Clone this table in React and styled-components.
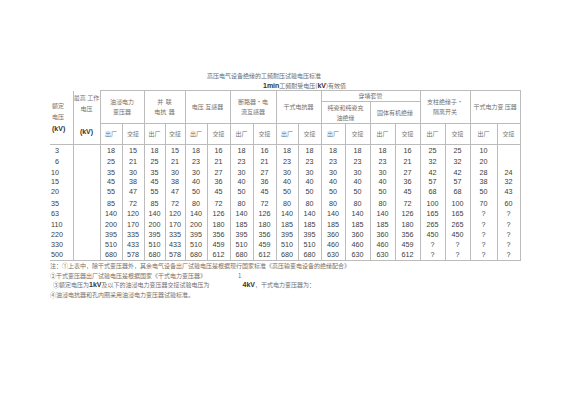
import React from 'react'
import styled, { createGlobalStyle } from 'styled-components'

const GlobalStyle = createGlobalStyle`
  html, body { margin: 0; padding: 0; background: #ffffff; }
  body { font-family: "Liberation Sans", "Noto Sans CJK SC", sans-serif; }
`

const Page = styled.div`
  width: 566px;
  height: 400px;
  background: #ffffff;
  box-sizing: border-box;
  padding-top: 70px;
  overflow: hidden;
`
const Title = styled.div`
  padding-left: 207px;
  font-size: 6px;
  line-height: 11px;
  color: #6a6a6a;
  font-family: "Noto Sans CJK SC", sans-serif;
`
const SubTitle = styled.div`
  padding-left: 263px;
  font-size: 6px;
  line-height: 9px;
  color: #6a6a6a;
  font-family: "Noto Sans CJK SC", sans-serif;
  b {
    font-family: "Liberation Sans", sans-serif;
    font-size: 7px;
    color: #333;
  }
`
const Table = styled.table`
  margin-left: 50px;
  width: 470px;
  table-layout: fixed;
  border-collapse: collapse;
  border-spacing: 0;
`
const Th = styled.th`
  padding: 0;
  font-weight: normal;
  font-size: 6px;
  line-height: 10px;
  color: #707070;
  font-family: "Noto Sans CJK SC", sans-serif;
  text-align: ${p => (p.$left ? 'left' : 'center')};
  vertical-align: ${p => (p.$top ? 'top' : 'middle')};
  border: 1px solid #bcbcbc;
  ${p => p.$noTop && 'border-top: none;'}
  ${p => p.$noLeft && 'border-left: none;'}
  height: ${p => p.$h || 'auto'};
`
const Td = styled.td`
  padding: 0;
  font-size: 7.2px;
  line-height: 8px;
  color: #3c3c3c;
  text-align: ${p => (p.$left ? 'left' : 'center')};
  border-left: ${p => (p.$noLeft ? 'none' : '1px solid #bcbcbc')};
  border-right: 1px solid #bcbcbc;
  ${p => p.$last && 'border-bottom: 1px solid #bcbcbc;'}
  height: ${p => p.$h}px;
  padding-left: ${p => p.$pl || 0}px;
`
const Stack = styled.div`
  display: flex;
  flex-direction: column;
  gap: ${p => p.$gap || 0}px;
  padding: ${p => p.$pad || '0'};
  b {
    font-family: "Liberation Sans", sans-serif;
    font-size: 7px;
    color: #333;
  }
`
const Notes = styled.div`
  margin-left: 50px;
  font-size: 6px;
  line-height: 9.7px;
  color: #707070;
  font-family: "Noto Sans CJK SC", sans-serif;
`
const NoteLine = styled.div`
  display: flex;
  padding-left: ${p => p.$indent || 0}px;
  white-space: nowrap;
  b {
    font-family: "Liberation Sans", sans-serif;
    font-size: 7px;
    color: #333;
  }
`
const Gap = styled.span`
  display: inline-block;
  width: ${p => p.$w}px;
`

const widths = [23, 27, 22, 22, 21, 20, 22, 23, 23, 23, 22, 23, 24, 25, 25, 25, 25, 25, 27, 23]
const heights = [11, 12, 10, 8, 12, 11, 10, 11, 10, 10, 10]
const rated = ['3', '6', '10', '15', '20', '35', '63', '110', '220', '330', '500']

const A = ['18', '25', '35', '45', '55', '85', '140', '200', '395', '510', '680']
const B = ['15', '21', '30', '38', '47', '72', '120', '170', '335', '433', '578']
const C = ['18', '23', '30', '40', '50', '80', '140', '200', '395', '510', '680']
const D = ['16', '21', '27', '36', '45', '72', '126', '180', '356', '459', '612']
const E = ['18', '23', '30', '40', '50', '80', '140', '185', '395', '510', '680']
const F = ['18', '23', '30', '40', '50', '80', '140', '185', '360', '460', '630']
const G = ['25', '32', '42', '57', '68', '100', '165', '265', '450', '?', '?']
const H = ['10', '20', '28', '38', '50', '70', '?', '?', '?', '?', '?']
const I = ['', '', '24', '32', '43', '60', '?', '?', '?', '?', '?']

const columns = [A, B, A, B, C, D, E, D, E, E, F, F, F, D, G, G, H, I]

export default function App() {
  return (
    <Page>
      <GlobalStyle />
      <Title>高压电气设备绝缘的工频耐压试验电压标准</Title>
      <SubTitle><b>1min</b>工频耐受电压(<b>kV</b>)有效值</SubTitle>
      <Table>
        <colgroup>
          {widths.map((w, i) => <col key={i} style={{ width: w }} />)}
        </colgroup>
        <thead>
          <tr>
            <Th rowSpan={3} $noTop $noLeft $left>
              <Stack $gap={1.5} $pad="0 0 0 2px">
                <span>额定</span><span>电压</span><b>(kV)</b>
              </Stack>
            </Th>
            <Th rowSpan={3} $noTop $top>
              <Stack $gap={1} $pad="2px 0 0 0">
                <span>最高 工作</span><span>电压</span><span style={{ height: 11 }} /><b>(kV)</b>
              </Stack>
            </Th>
            <Th colSpan={2} rowSpan={2}><Stack><span>油浸电力</span><span>变压器</span></Stack></Th>
            <Th colSpan={2} rowSpan={2}><Stack><span>并 &nbsp;联</span><span>电抗 &nbsp;器</span></Stack></Th>
            <Th colSpan={2} rowSpan={2}>电压 互感器</Th>
            <Th colSpan={2} rowSpan={2}><Stack><span>断路器·电</span><span>流互感器</span></Stack></Th>
            <Th colSpan={2} rowSpan={2}>干式电抗器</Th>
            <Th colSpan={4} $h="10px">穿墙套管</Th>
            <Th colSpan={2} rowSpan={2}><Stack><span>支柱绝缘子·</span><span>隔离开关</span></Stack></Th>
            <Th colSpan={2} rowSpan={2}>干式电力变 压器</Th>
          </tr>
          <tr>
            <Th colSpan={2} $h="21px"><Stack><span>纯瓷和纯瓷充</span><span>油绝缘</span></Stack></Th>
            <Th colSpan={2}>固体有机绝缘</Th>
          </tr>
          <tr>
            {Array.from({ length: 9 }).flatMap((_, i) => [
              <Th key={`a${i}`} $h="20px">出厂</Th>,
              <Th key={`b${i}`}>交接</Th>,
            ])}
          </tr>
        </thead>
        <tbody>
          {rated.map((r, ri) => (
            <tr key={r}>
              <Td $noLeft $left $h={heights[ri]} $pl={r.length === 1 ? 5 : 1} $last={ri === 10}>{r}</Td>
              <Td $h={heights[ri]} $last={ri === 10}></Td>
              {columns.map((col, ci) => (
                <Td key={ci} $h={heights[ri]} $last={ri === 10}>{col[ri]}</Td>
              ))}
            </tr>
          ))}
        </tbody>
      </Table>
      <Notes>
        <NoteLine>注：①上表中，除干式变压器外，其余电气设备出厂试验电压是根据现行国家标准《高压输变电设备的绝缘配合》</NoteLine>
        <NoteLine>②干式变压器出厂试验电压是根据国家《干式电力变压器》<Gap $w={32} />1</NoteLine>
        <NoteLine $indent={3}>③额定电压为<b>1kV</b>及以下的油浸电力变压器交接试验电压为<Gap $w={33} /><b>4kV</b>，干式电力变压器为：</NoteLine>
        <NoteLine>④油浸电抗器和孔内圈采用油浸电力变压器试验标准。</NoteLine>
      </Notes>
    </Page>
  )
}
